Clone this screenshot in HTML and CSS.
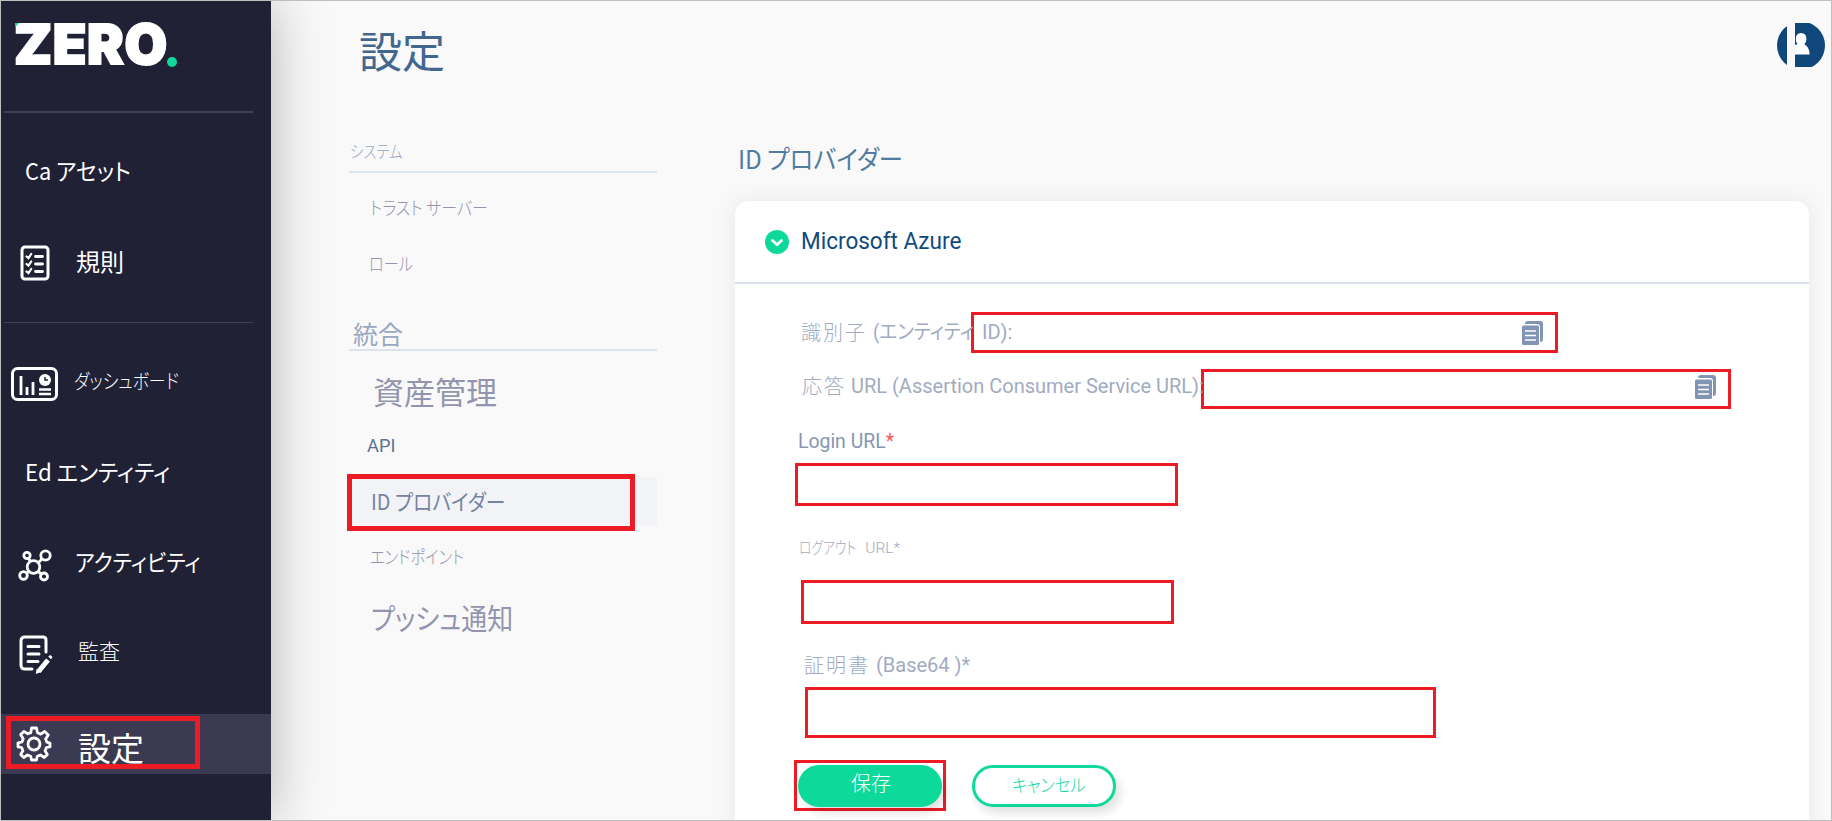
FILE: index.html
```html
<!DOCTYPE html>
<html lang="ja">
<head>
<meta charset="utf-8">
<title>設定</title>
<link rel="stylesheet" href="styles.css">
</head>
<body>
<div class="app">
  <aside class="sidebar">
    <div class="logo"><span class="logo-text">ZERO</span><span class="logo-dot"></span></div>
    <nav class="side-nav">
      <a class="item item-assets"><span class="t t-assets">Ca アセット</span></a>
      <a class="item item-rules">
        <svg class="icon icon-rules" width="31" height="37" viewBox="0 0 31 37" fill="none" stroke="#fff" stroke-linecap="round"><rect x="2" y="2" width="26" height="32" rx="3" stroke-width="3"/><path d="M15.500 11.500h7M15.500 19h7M15.500 26.500h7" stroke-width="2.800"/><path d="M6.500 11.500l2 1.700 2.700-4.200M6.500 19l2 1.700 2.700-4.200M6.500 26.500l2 1.700 2.700-4.200" stroke-width="2.200"/></svg>
        <span class="t t-rules">規則</span>
      </a>
      <hr class="side-line">
      <a class="item item-dash">
        <svg class="icon icon-dash" width="48" height="35" viewBox="0 0 48 35" fill="none" stroke="#fff"><rect x="1.500" y="1.500" width="44" height="31" rx="5" stroke-width="3"/><path d="M10 9v19M16 20v8M22 15v13" stroke-width="2.800"/><path d="M28 22.500h12M28 27h12" stroke-width="2.600"/><circle cx="34" cy="13" r="6" fill="#fff" stroke="none"/><path d="M34 10v3h3" stroke="#212136" stroke-width="1.500"/></svg>
        <span class="t t-dash">ダッシュボード</span>
      </a>
      <a class="item item-ent"><span class="t t-ent">Ed エンティティ</span></a>
      <a class="item item-act">
        <svg class="icon icon-act" width="35" height="33" viewBox="0 0 35 33" fill="none" stroke="#fff" stroke-width="2.800"><circle cx="15.500" cy="18" r="6.300"/><circle cx="9" cy="6.500" r="3.200"/><circle cx="27.500" cy="6.500" r="4.700"/><circle cx="5.500" cy="26.500" r="3.800"/><circle cx="26" cy="27.500" r="3.500"/><path d="M10.500 9.500l2 3M24 10l-4 4M9 24l2-2M20 22.500l3.500 2.500"/></svg>
        <span class="t t-act">アクティビティ</span>
      </a>
      <a class="item item-audit">
        <svg class="icon icon-audit" width="35" height="40" viewBox="0 0 35 40" fill="none" stroke="#fff" stroke-linecap="round"><path d="M13 34H6q-4 0-4-4V6q0-4 4-4h18q3 0 3 3v12" stroke-width="3"/><path d="M9 11.500h11M9 19h11M9 26.500h10" stroke-width="3"/><path d="M29 25L19.500 36.500" stroke-width="5" stroke-linecap="butt"/><path d="M17.500 34l-.7 5 4.700-1.800zM29.200 21.500l2-1.500 2.300 2-1.500 2.300z" fill="#fff" stroke="none"/></svg>
        <span class="t t-audit">監査</span>
      </a>
      <a class="item item-set">
        <svg class="icon icon-set" width="36" height="36" viewBox="0 0 36 36" fill="none" stroke="#fff" stroke-width="2.800" stroke-linejoin="round"><circle cx="18" cy="18" r="6"/><path d="M15.500 2h5l1 4.800 3.200 1.300 4-2.700 3.600 3.600-2.700 4 1.300 3.200L34 17.200v3.600l-3.600.7-1.300 3.200 2.200 3.800-3 3-3.800-2.500-3.200 1.300L20.500 34h-5l-.8-3.700-3.200-1.300-3.800 2.500-3-3 2.200-3.800-1.300-3.200L2 20.800v-4l4-.8 1.200-3.200L4.700 8.600l3.200-3.200 3.900 2.400 3-1.200z"/></svg>
        <span class="t t-set">設定</span>
        <i class="mark"></i>
      </a>
    </nav>
  </aside>

  <section class="menu">
    <h1 class="title"><span class="t t-title">設定</span></h1>
    <h2 class="group g-sys"><span class="t t-sys">システム</span></h2>
    <a class="link l-trust"><span class="t t-trust">トラスト サーバー</span></a>
    <a class="link l-role"><span class="t t-role">ロール</span></a>
    <h2 class="group g-int"><span class="t t-int">統合</span></h2>
    <a class="link l-asset"><span class="t t-asset">資産管理</span></a>
    <a class="link l-api"><span class="t t-api">API</span></a>
    <a class="link l-idp"><span class="t t-idp">ID プロバイダー</span><i class="mark"></i></a>
    <a class="link l-end"><span class="t t-end">エンドポイント</span></a>
    <a class="link l-push"><span class="t t-push">プッシュ通知</span></a>
  </section>

  <main class="main">
    <div class="topbar">
      <svg width="48" height="44" viewBox="0 0 48 44"><circle cx="24" cy="22.500" r="24" fill="#10477a"/><path d="M10 0h8v44h-8z" fill="#f9f9f9"/><path d="M18 22q1.500-.3 2.500-1-1.700-1.800-1.700-5 0-6 5.300-6t5.300 6q0 3.200-2 5.200 5.200 3 5.200 10.300H18z" fill="#fff"/></svg>
    </div>
    <h2 class="heading"><span class="t t-head">ID プロバイダー</span></h2>
    <div class="card">
      <header class="card-head">
        <svg width="24" height="24" viewBox="0 0 24 24"><circle cx="12" cy="12" r="12" fill="#0dd99a"/><path d="M7.500 10.500l4.500 4.300 4.500-4.300" fill="none" stroke="#fff" stroke-width="2.800" stroke-linecap="round" stroke-linejoin="round"/></svg>
        <span class="t t-azure">Microsoft Azure</span>
      </header>
      <div class="form">
        <div class="row row-id">
          <span class="lab"><span class="t kanji">識別子</span><span class="t t-id1">(エンティティ</span></span>
          <div class="box box-id"><span class="t t-id2">ID):</span>
            <svg class="copy" width="21" height="24" viewBox="0 0 21 24"><path d="M3 3q0-3 3-3h12q3 0 3 3v15q0 3-3 3V6q0-3-3-3z" fill="#8294b3"/><rect y="4.500" width="17" height="19.500" rx="1.500" fill="#8294b3"/><path d="M3 10h11M3 14.500h11M3 19h11" stroke="#fff" stroke-width="1.500"/></svg>
          </div>
        </div>
        <div class="row row-acs">
          <span class="lab"><span class="t kanji">応答</span><span class="t t-acs2">URL (Assertion Consumer Service URL):</span></span>
          <div class="box box-acs">
            <svg class="copy" width="21" height="24" viewBox="0 0 21 24"><path d="M3 3q0-3 3-3h12q3 0 3 3v15q0 3-3 3V6q0-3-3-3z" fill="#8294b3"/><rect y="4.500" width="17" height="19.500" rx="1.500" fill="#8294b3"/><path d="M3 10h11M3 14.500h11M3 19h11" stroke="#fff" stroke-width="1.500"/></svg>
          </div>
        </div>
        <label class="field f-login"><span class="t t-login">Login URL<b class="req">*</b></span></label>
        <div class="box box-login"></div>
        <label class="field f-logout"><span class="t t-out1">ログアウト</span><span class="t t-out2">URL*</span></label>
        <div class="box box-logout"></div>
        <label class="field f-cert"><span class="t kanji">証明書</span><span class="t t-cert2">(Base64 )*</span></label>
        <div class="box box-cert"></div>
        <div class="actions">
          <div class="box box-save"><button class="btn save"><span class="t t-save">保存</span></button></div>
          <button class="btn cancel"><span class="t t-cancel">キャンセル</span></button>
        </div>
      </div>
    </div>
  </main>
</div>
</body>
</html>
```
FILE: styles.css
```css
* { box-sizing: border-box; }
body { margin: 0; width: 1832px; height: 821px; overflow: hidden; background: #f9f9f9; font-family: "Noto Sans CJK JP", sans-serif; }
h1, h2, hr { margin: 0; font-weight: 400; }
svg { display: block; flex: none; }
.app { display: flex; width: 1832px; height: 821px; border: 1px solid #bfbfbf; overflow: hidden; }
.t { display: inline-block; flex: none; white-space: nowrap; transform-origin: 0 50%; transform: scaleX(var(--sx, 1)); font-feature-settings: "palt"; line-height: 1; font-weight: 400; }
.mark { position: absolute; border: 5px solid #ed1c24; }

.sidebar { width: 270px; flex: none; background: #212136; color: #fff; box-shadow: 0 0 54px rgba(0,0,0,.28); z-index: 1; }
.logo { position: relative; display: flex; height: 112px; margin: 0 18px 0 3px; padding: 22px 0 0 10px; border-bottom: 2px solid #3f3f55; }
.logo::after { content: ""; position: absolute; left: 11px; top: 22px; border-style: solid; border-width: 4px 4px 0 0; border-color: #0dd99a transparent; }
.logo-text { font: 900 55px/43px Inter, sans-serif; letter-spacing: .6px; -webkit-text-stroke: 2px #fff; }
.logo-dot { width: 10px; height: 10px; border-radius: 50%; background: #0dd99a; margin: 34px 0 0 -1px; }
.item { position: relative; display: flex; align-items: center; height: 60px; }
.item-assets, .item-ent { padding-left: 24px; }
.item-assets { margin-top: 28px; }
.item-rules { margin-top: 32px; }
.side-line { height: 1px; border: 0; background: #3f3f55; margin: 29px 18px 0 3px; }
.item-dash { margin-top: 31px; }
.item-ent { margin-top: 30px; }
.item-act { margin-top: 31px; }
.item-audit { margin-top: 30px; }
.item-set { margin-top: 29px; background: #3c3a52; }
.icon-rules { margin: 0 25px 0 19px; }
.icon-dash { margin: 0 15px 0 10px; }
.icon-act { margin: 0 22px 0 17px; }
.icon-audit { margin: 0 24px 0 18px; }
.icon-set { margin: 0 26px 0 15px; }
.item .mark { left: 5px; top: 2px; width: 194px; height: 53px; }
.t-set { position: relative; z-index: 1; }
.t-assets { font-size: 23px; --sx: .95; margin-bottom: 2px; }
.t-ent { font-size: 23px; --sx: .97; margin-bottom: 6px; }
.t-rules { font-size: 24px; margin-bottom: 4px; }
.t-dash { font-size: 20px; --sx: .845; margin-bottom: 6px; font-weight: 300; }
.t-act { font-size: 23px; --sx: .92; margin-bottom: 8px; }
.t-audit { font-size: 21px; margin-bottom: 9px; font-weight: 300; }
.t-set { font-size: 33px; margin-top: 7px; }

.menu { width: 308px; flex: none; margin-left: 78px; color: #9395ae; }
.title { height: 120px; padding: 27px 0 0 10px; color: #42678f; }
.t-title { font-size: 43px; }
.group { display: flex; align-items: center; border-bottom: 2px solid #dbe3ef; color: #9ba8c0; }
.g-sys { height: 52px; padding: 8px 0 0 1px; }
.g-int { height: 33px; margin-top: 27px; padding-left: 4px; }
.link { position: relative; display: flex; align-items: center; padding-left: 21px; height: 56px; }
.l-trust { margin-top: 6px; }
.l-role { padding-left: 20px; }
.l-asset { margin-top: 11px; padding-left: 24px; }
.l-api { padding-left: 18px; height: 54px; }
.l-end { margin-top: 3px; }
.l-push { margin-top: 5px; padding-left: 22px; }
.t-sys { font-size: 17px; --sx: .85; font-weight: 300; }
.t-trust, .t-role, .t-end { font-size: 18px; font-weight: 300; }
.t-trust { --sx: .89; }
.t-role { --sx: .84; }
.t-end { --sx: .85; }
.t-int { font-size: 25px; }
.t-asset { font-size: 31px; }
.t-api { font: 19px/1 Roboto; color: #5a7391; --sx: .96; }
.l-idp { background: #f1f3f7; height: 48px; margin-top: 5px; padding-left: 22px; color: #7683a0; }
.l-idp .mark { left: -2px; top: -3px; width: 288px; height: 57px; }
.t-idp { font-size: 22px; --sx: .9; margin-bottom: 3px; }
.t-push { font-size: 29px; --sx: .895; }

.main { width: 1074px; flex: none; margin-left: 78px; }
.topbar { display: flex; justify-content: flex-end; padding-top: 22px; height: 130px; margin-right: -16px; }
.heading { height: 70px; padding-left: 3px; color: #527ba0; }
.t-head { font-size: 26px; --sx: .935; margin-top: 14px; }
.card { height: 640px; background: #fff; border-radius: 13px 13px 0 0; box-shadow: 0 0 20px rgba(100,110,160,.12); }
.card-head { display: flex; align-items: center; gap: 12px; height: 83px; padding-left: 30px; border-bottom: 2px solid #dae1ed; }
.t-azure { font: 23px/1 Roboto; color: #124a80; --sx: .98; }
.form { padding: 28px 0 0 60px; color: #9fabc2; }
.row { display: flex; align-items: center; }
.row .t, .field .t { font-family: Roboto, "Noto Sans CJK JP", sans-serif; font-size: 20px; }
.row .kanji, .field .kanji { font-family: "Noto Sans CJK JP", sans-serif; font-weight: 300; letter-spacing: 2px; }
.box { border: 3px solid #ed1c24; }
.row .box { display: flex; justify-content: space-between; align-items: center; }
.lab { display: flex; gap: 5px; flex: none; }
.row-id .lab { width: 170px; margin-left: 6px; gap: 6px; padding-bottom: 2px; }
.t-id1 { --sx: .93; }
.t-id2 { padding-bottom: 2px; }
.box-id { width: 587px; height: 41px; padding: 0 12px 0 8px; background: #fff; }
.row-acs { margin-top: 16px; }
.row-acs .lab { width: 399px; margin-left: 7px; padding-bottom: 6px; position: relative; z-index: 1; }
.box-acs { width: 530px; height: 40px; }
.row-acs .copy { margin: 0 12px 4px auto; }
.field { display: flex; align-items: center; gap: 8px; }
.f-login { height: 54px; padding: 9px 0 0 3px; color: #8596b3; }
.t-login { --sx: .97; }
.req { color: #ff5555; font-weight: 400; }
.box-login { width: 383px; height: 43px; }
.f-logout { height: 74px; padding: 11px 0 0 4px; }
.field .t-out1 { font-size: 17px; font-weight: 300; --sx: .75; margin-right: -18px; }
.field .t-out2 { font-size: 15.5px; font-weight: 300; }
.box-logout { width: 373px; height: 44px; margin-left: 6px; }
.f-cert { height: 63px; padding: 19px 0 0 9px; gap: 6px; }
.box-cert { width: 631px; height: 51px; margin-left: 10px; }
.actions { display: flex; gap: 26px; margin: 22px 0 0 -1px; align-items: flex-start; }
.box-save { width: 152px; height: 51px; padding: 2px 1px; }
.btn { display: flex; width: 144px; height: 42px; padding: 0; border-radius: 21px; border: 3px solid #0dd99a; box-shadow: 4px 6px 10px rgba(0,0,0,.12); font-family: inherit; }
.save { background: #0dd99a; color: #fff; }
.cancel { background: #fff; color: #0dd99a; margin-top: 5px; }
.t-save { font-size: 20px; margin: 5px 0 0 50px; font-weight: 300; }
.t-cancel { font-size: 18px; --sx: .9; margin: 7px 0 0 37px; font-weight: 300; }
```
